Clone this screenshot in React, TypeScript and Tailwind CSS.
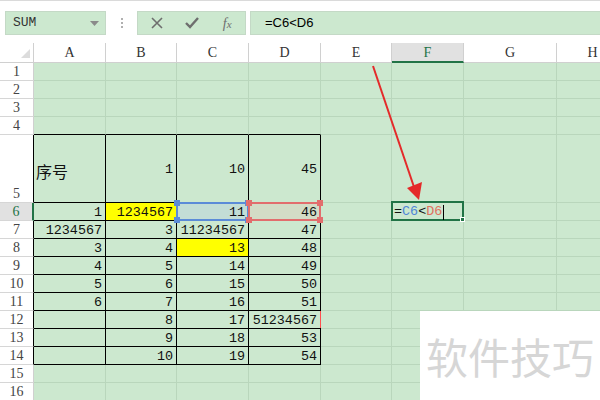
import React from 'react';

const MONO = { fontFamily: '"Liberation Mono", "Noto Sans CJK SC", monospace' };

const colLetters = ['A', 'B', 'C', 'D', 'E', 'F', 'G', 'H'];
const colWidths = ['w-[72px]', 'w-[71px]', 'w-[72px]', 'w-[72px]', 'w-[71px]', 'w-[72px]', 'w-[93px]', 'w-[72px]'];

// table content A..D for rows 5..14
const data: Record<number, string[]> = {
    5: ['序号', '1', '10', '45'],
    6: ['1', '1234567', '11', '46'],
    7: ['1234567', '3', '11234567', '47'],
    8: ['3', '4', '13', '48'],
    9: ['4', '5', '14', '49'],
    10: ['5', '6', '15', '50'],
    11: ['6', '7', '16', '51'],
    12: ['', '8', '17', '51234567'],
    13: ['', '9', '18', '53'],
    14: ['', '10', '19', '54'],
};

const rows = Array.from({ length: 16 }, (_, i) => i + 1);

const Corners: React.FC<{ color: string }> = ({ color }) => (
    <>
        <span className={`absolute -left-[4px] -top-[4px] w-[6px] h-[6px] ${color}`} />
        <span className={`absolute -right-[4px] -top-[4px] w-[6px] h-[6px] ${color}`} />
        <span className={`absolute -left-[4px] -bottom-[4px] w-[6px] h-[6px] ${color}`} />
        <span className={`absolute -right-[4px] -bottom-[4px] w-[6px] h-[6px] ${color}`} />
    </>
);

const Cell: React.FC<{ row: number; col: number }> = ({ row, col }) => {
    const inTable = row >= 5 && row <= 14 && col <= 3;
    const topOfTable = row === 4 && col <= 3;
    const right = inTable ? 'border-r-black' : 'border-r-[#b9d6bc]';
    const bottom = inTable || topOfTable ? 'border-b-black' : 'border-b-[#b9d6bc]';
    const text = data[row]?.[col] ?? '';
    const yellow = (row === 6 && col === 1) || (row === 8 && col === 2);
    let bg = 'bg-[#cce8cf]';
    if (yellow) bg = 'bg-[#ffff00]';
    if (row === 6 && col === 2) bg = 'bg-[#c3ddd6]';
    if (row === 6 && col === 3) bg = 'bg-[#d3dcc6]';
    const left = row === 5 && col === 0;

    return (
        <div
            className={`relative shrink-0 ${colWidths[col]} h-full border-r border-b ${right} ${bottom} ${bg} flex items-center ${left ? 'justify-start pl-[2px]' : 'justify-end pr-[3px]'} text-[13.4px] text-[#111] leading-none pt-[2px]`}
            style={MONO}
        >
            {left ? <span className="text-[16px] pt-[2px]" style={{ fontFamily: '"Noto Sans CJK SC", sans-serif' }}>{text}</span> : text}
            {row === 6 && col === 2 && (
                <div className="absolute z-10 -left-px -top-px -right-px -bottom-px border-2 border-[#5b8bd8]">
                    <Corners color="bg-[#5b8bd8]" />
                </div>
            )}
            {row === 6 && col === 3 && (
                <div className="absolute z-10 -left-px -top-px -right-px -bottom-px border-2 border-[#e26d6d]">
                    <Corners color="bg-[#e26d6d]" />
                </div>
            )}
            {row === 12 && col === 3 && <span className="absolute -right-px top-0 bottom-0 w-px bg-[#ff5050]" />}
            {row === 6 && col === 5 && (
                <div className="absolute z-10 -left-px -top-[2px] -right-px -bottom-px border-2 border-[#217346] flex items-center pl-[1px] pt-[2px]">
                    <span>=</span>
                    <span className="text-[#4f86d6]">C6</span>
                    <span>&lt;</span>
                    <span className="text-[#e0715e]">D6</span>
                    <span className="w-px h-[15px] bg-black ml-px" />
                    <span className="absolute -right-[3px] -bottom-[3px] w-[5px] h-[5px] bg-[#217346] border border-white" />
                </div>
            )}
        </div>
    );
};

export default function App() {
    return (
        <div className="relative w-[600px] h-[400px] overflow-hidden bg-white border-t border-[#dadada]">
            {/* formula bar */}
            <div className="h-[42px] flex items-start pt-[10px] pl-[5px]">
                <div className="w-[101px] h-[24px] bg-[#cce8cf] border border-[#c4d9c6] flex items-center justify-between pl-[7px] pr-[6px]">
                    <span className="text-[13px] text-[#333]" style={MONO}>SUM</span>
                    <svg width="9" height="5" viewBox="0 0 9 5"><path d="M0 0h9L4.5 5z" fill="#8a8a8a" /></svg>
                </div>
                <div className="w-[31px] h-[24px] flex flex-col items-center justify-center gap-[2px]">
                    <span className="w-[2px] h-[2px] bg-[#b0b0b0]" />
                    <span className="w-[2px] h-[2px] bg-[#b0b0b0]" />
                    <span className="w-[2px] h-[2px] bg-[#b0b0b0]" />
                </div>
                <div className="w-[109px] h-[24px] bg-[#cce8cf] border border-[#c4d9c6] flex items-center">
                    <div className="w-[38px] flex justify-center">
                        <svg width="12" height="12" viewBox="0 0 12 12"><path d="M1 1l10 10M11 1L1 11" stroke="#6e6e6e" strokeWidth="1.6" /></svg>
                    </div>
                    <div className="w-[34px] flex justify-center">
                        <svg width="14" height="12" viewBox="0 0 14 12"><path d="M1 6l4 4 8-9" stroke="#6e6e6e" strokeWidth="2.4" fill="none" /></svg>
                    </div>
                    <div className="w-[36px] flex justify-center">
                        <span className="italic text-[14px] text-[#6e6e6e]" style={{ fontFamily: '"Liberation Serif", serif' }}>f<span className="text-[11px]">x</span></span>
                    </div>
                </div>
                <div className="ml-[4px] flex-1 h-[24px] bg-[#cce8cf] border-y border-l border-[#c4d9c6] flex items-center pl-[14px] text-[13px] text-black" style={{ fontFamily: '"Liberation Sans", sans-serif' }}>
                    =C6&lt;D6
                </div>
            </div>

            {/* column headers */}
            <div className="flex h-[20px]">
                <div className="relative w-[34px] shrink-0 h-full border-r border-b border-[#d0d0d0] bg-white">
                    <svg className="absolute right-[3px] bottom-[4px]" width="9" height="9" viewBox="0 0 9 9"><path d="M9 0v9H0z" fill="#dcdcdc" /></svg>
                </div>
                {colLetters.map((l, i) => (
                    <div
                        key={l}
                        className={`shrink-0 ${colWidths[i]} h-full flex items-center justify-center text-[14px] border-r ${i === 5 ? 'bg-[#e1e1e1] text-[#217346] border-b-2 border-b-[#217346] border-r-[#d0d0d0]' : 'bg-white text-[#333] border-b border-[#d0d0d0]'}`}
                        style={{ fontFamily: '"Liberation Serif", serif' }}
                    >
                        {l}
                    </div>
                ))}
            </div>

            {/* rows */}
            {rows.map((r) => (
                <div key={r} className={`flex ${r === 5 ? 'h-[68px]' : 'h-[18px]'}`}>
                    <div
                        className={`w-[34px] shrink-0 h-full flex items-end justify-center pb-[1px] text-[14px] leading-none border-b border-b-[#d6d6d6] ${r === 6 ? 'bg-[#e1e1e1] text-[#217346] border-r-2 border-r-[#217346]' : `bg-white text-[#444] border-r ${r >= 5 && r <= 14 ? 'border-r-black' : 'border-r-[#d0d0d0]'}`}`}
                        style={{ fontFamily: '"Liberation Serif", serif' }}
                    >
                        {r}
                    </div>
                    {colLetters.map((_, c) => (
                        <Cell key={c} row={r} col={c} />
                    ))}
                </div>
            ))}

            {/* red arrow annotation */}
            <svg className="absolute left-0 top-0 z-20 pointer-events-none" width="600" height="400">
                <line x1="373" y1="65" x2="414" y2="186" stroke="#e42a2a" strokeWidth="2" />
                <polygon points="419,199 407,187 422,181" fill="#e42a2a" />
            </svg>

            {/* watermark */}
            <div className="absolute z-20 left-[420px] top-[310px] w-[180px] h-[90px] bg-white flex items-center pl-[6px]">
                <span className="text-[42px] leading-none text-[#d6d6d6] tracking-[0px]" style={{ fontFamily: '"Noto Sans CJK SC", sans-serif' }}>
                    软件技巧
                </span>
            </div>
        </div>
    );
}
